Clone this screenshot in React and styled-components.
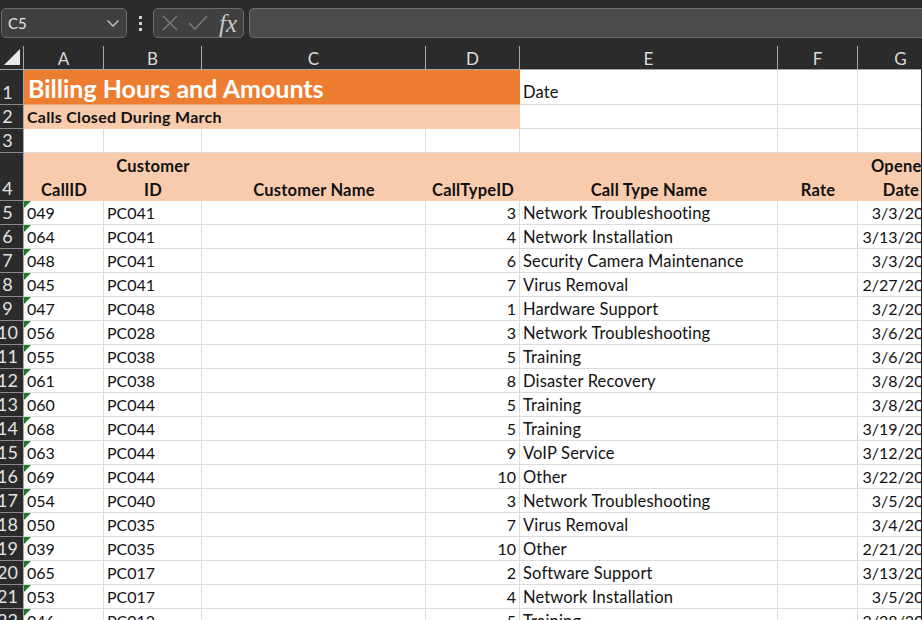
import React from "react";
import styled, { createGlobalStyle } from "styled-components";

const Global = createGlobalStyle`
  html, body { margin: 0; padding: 0; background: #2b2b2b; overflow: hidden; }
  body { font-family: "Lato", "Open Sans", sans-serif; }
`;

const Page = styled.div`
  width: 922px;
  height: 620px;
  overflow: hidden;
  background: #2b2b2b;
`;

const FormulaBar = styled.div`
  height: 46px;
  box-sizing: border-box;
  padding: 8px 0 8px 1px;
  display: flex;
  align-items: flex-start;
`;

const NameBox = styled.div`
  width: 126px;
  height: 30px;
  box-sizing: border-box;
  border: 1px solid #6c6c6c;
  border-radius: 5px;
  background: #404040;
  color: #e6e6e6;
  font-size: 15px;
  display: flex;
  align-items: center;
  justify-content: space-between;
  padding: 0 6px 0 6px;
`;

const Grip = styled.div`
  width: 26px;
  height: 30px;
  flex: none;
  display: flex;
  flex-direction: column;
  align-items: center;
  justify-content: center;
  gap: 3px;
  & > i { width: 3px; height: 3px; background: #d0d0d0; display: block; }
`;

const ActionBox = styled.div`
  width: 91px;
  height: 30px;
  box-sizing: border-box;
  flex: none;
  border: 1px solid #6c6c6c;
  border-radius: 5px;
  background: #404040;
  display: flex;
  align-items: center;
  padding-left: 7px;
  gap: 9px;
`;

const Fx = styled.span`
  font-family: "Liberation Serif", serif;
  font-style: italic;
  font-size: 25px;
  color: #c8c8c8;
  margin-left: 2px;
  line-height: 1;
`;

const FormulaInput = styled.div`
  flex: 1;
  margin-left: 5px;
  height: 30px;
  box-sizing: border-box;
  border: 1px solid #6c6c6c;
  border-right: none;
  border-radius: 5px 0 0 5px;
  background: #4b4b4b;
`;

const Sheet = styled.div`
  width: 921px;
  height: 574px;
  overflow: hidden;
  display: grid;
  grid-template-columns: 24px 80px 98px 224px 94px 258px 80px 86px;
  grid-template-rows: 24px 35px 24px 24px 48px repeat(18, 24px);
  font-size: 16px;
  color: #111;
`;

const Corner = styled.div`
  background: #2b2b2b;
  border-right: 1px solid #a8a8a8;
  border-bottom: 1px solid #a8a8a8;
  box-sizing: border-box;
  display: flex;
  align-items: flex-end;
  padding: 0 3px 4px 4px;
  & > svg { display: block; }
`;

const ColHead = styled.div`
  background: #2b2b2b;
  color: #dcdcdc;
  font-size: 17px;
  box-sizing: border-box;
  border-right: 1px solid #a8a8a8;
  border-bottom: 1px solid #a8a8a8;
  text-align: center;
  line-height: 25px;
`;

const RowHead = styled.div`
  background: #2b2b2b;
  color: #e2e2e2;
  font-size: 18px;
  box-sizing: border-box;
  border-right: 1px solid #a8a8a8;
  border-bottom: 1px solid #8a8a8a;
  width: 24px;
  display: flex;
  align-items: flex-end;
  justify-content: center;
  padding-right: 8px;
  line-height: 23px;
  white-space: nowrap;
`;

const Cell = styled.div`
  position: relative;
  box-sizing: border-box;
  background: #fff;
  border-right: 1px solid #dcdcdc;
  border-bottom: 1px solid #dcdcdc;
  padding: 0 ${(p) => (p.$date ? "1px" : "3px")} 0 3px;
  line-height: 23px;
  white-space: nowrap;
  overflow: hidden;
  display: flex;
  align-items: flex-end;
  justify-content: ${(p) => (p.$right ? "flex-end" : "flex-start")};
`;

const TextCell = styled(Cell)`
  font-size: 16.5px;
  letter-spacing: 0.15px;
  line-height: 21px;
  padding-bottom: ${(p) => (p.$raised ? "1px" : "0")};
`;

const Flag = styled.span`
  position: absolute;
  left: 0;
  top: 0;
  width: 0;
  height: 0;
  border-top: 7px solid #1f7a2e;
  border-right: 7px solid transparent;
`;

const Title = styled.div`
  grid-column: span 4;
  background: #ed7d31;
  color: #fff;
  font-size: 25px;
  font-weight: 700;
  padding-left: 4px;
  line-height: 36px;
  height: 35px;
  box-sizing: border-box;
  border-bottom: 1px solid #f3a873;
`;

const Subtitle = styled.div`
  grid-column: span 4;
  background: #f8cbad;
  color: #111;
  font-size: 16px;
  letter-spacing: 0.28px;
  font-weight: 700;
  padding-left: 3px;
  line-height: 24px;
`;

const HeadCell = styled.div`
  background: #f8cbad;
  color: #111;
  font-weight: 700;
  font-size: 16.5px;
  letter-spacing: 0.2px;
  text-align: center;
  line-height: 24px;
  margin-bottom: -1px;
  display: flex;
  flex-direction: column;
  justify-content: flex-end;
  white-space: nowrap;
  overflow: hidden;
`;

const columns = ["A", "B", "C", "D", "E", "F", "G"];

const calls = [
  ["049", "PC041", 3, "Network Troubleshooting", "3/3/2020"],
  ["064", "PC041", 4, "Network Installation", "3/13/2020"],
  ["048", "PC041", 6, "Security Camera Maintenance", "3/3/2020"],
  ["045", "PC041", 7, "Virus Removal", "2/27/2020"],
  ["047", "PC048", 1, "Hardware Support", "3/2/2020"],
  ["056", "PC028", 3, "Network Troubleshooting", "3/6/2020"],
  ["055", "PC038", 5, "Training", "3/6/2020"],
  ["061", "PC038", 8, "Disaster Recovery", "3/8/2020"],
  ["060", "PC044", 5, "Training", "3/8/2020"],
  ["068", "PC044", 5, "Training", "3/19/2020"],
  ["063", "PC044", 9, "VoIP Service", "3/12/2020"],
  ["069", "PC044", 10, "Other", "3/22/2020"],
  ["054", "PC040", 3, "Network Troubleshooting", "3/5/2020"],
  ["050", "PC035", 7, "Virus Removal", "3/4/2020"],
  ["039", "PC035", 10, "Other", "2/21/2020"],
  ["065", "PC017", 2, "Software Support", "3/13/2020"],
  ["053", "PC017", 4, "Network Installation", "3/5/2020"],
  ["046", "PC012", 5, "Training", "2/28/2020"],
];

const blanks = (n) => Array.from({ length: n }, (_, i) => <Cell key={i} />);

const App = () => {
  return (
    <Page>
      <Global />
      <FormulaBar>
        <NameBox>
          C5
          <svg width="14" height="14" viewBox="0 0 14 14" fill="none" stroke="#c8c8c8" strokeWidth="1.3">
            <path d="M1.5 4.5 7 10l5.5-5.5" />
          </svg>
        </NameBox>
        <Grip>
          <i />
          <i />
          <i />
        </Grip>
        <ActionBox>
          <svg width="18" height="18" viewBox="0 0 18 18" fill="none" stroke="#7c7c7c" strokeWidth="1.4">
            <path d="M2 2l14 14M16 2 2 16" />
          </svg>
          <svg width="20" height="16" viewBox="0 0 20 16" fill="none" stroke="#7c7c7c" strokeWidth="1.4">
            <path d="M1 8l6 6L19 1" />
          </svg>
          <Fx>fx</Fx>
        </ActionBox>
        <FormulaInput />
      </FormulaBar>
      <Sheet>
        <Corner>
          <svg width="16" height="16" viewBox="0 0 16 16">
            <path d="M16 0v16H0z" fill="#e8e8e8" />
          </svg>
        </Corner>
        {columns.map((c) => (
          <ColHead key={c}>{c}</ColHead>
        ))}

        <RowHead>1</RowHead>
        <Title>Billing Hours and Amounts</Title>
        <TextCell $raised>Date</TextCell>
        {blanks(2)}

        <RowHead>2</RowHead>
        <Subtitle>Calls Closed During March</Subtitle>
        {blanks(3)}

        <RowHead>3</RowHead>
        {blanks(7)}

        <RowHead>4</RowHead>
        <HeadCell>CallID</HeadCell>
        <HeadCell>
          <span>Customer</span>
          <span>ID</span>
        </HeadCell>
        <HeadCell>Customer Name</HeadCell>
        <HeadCell>CallTypeID</HeadCell>
        <HeadCell>Call Type Name</HeadCell>
        <HeadCell>Rate</HeadCell>
        <HeadCell>
          <span>Opened</span>
          <span>Date</span>
        </HeadCell>

        {calls.map((row, i) => (
          <React.Fragment key={row[0]}>
            <RowHead>{i + 5}</RowHead>
            <Cell>
              <Flag />
              {row[0]}
            </Cell>
            <Cell>{row[1]}</Cell>
            <Cell />
            <Cell $right>{row[2]}</Cell>
            <TextCell>{row[3]}</TextCell>
            <Cell />
            <Cell $right $date>
              {row[4]}
            </Cell>
          </React.Fragment>
        ))}
      </Sheet>
    </Page>
  );
};

export default App;
